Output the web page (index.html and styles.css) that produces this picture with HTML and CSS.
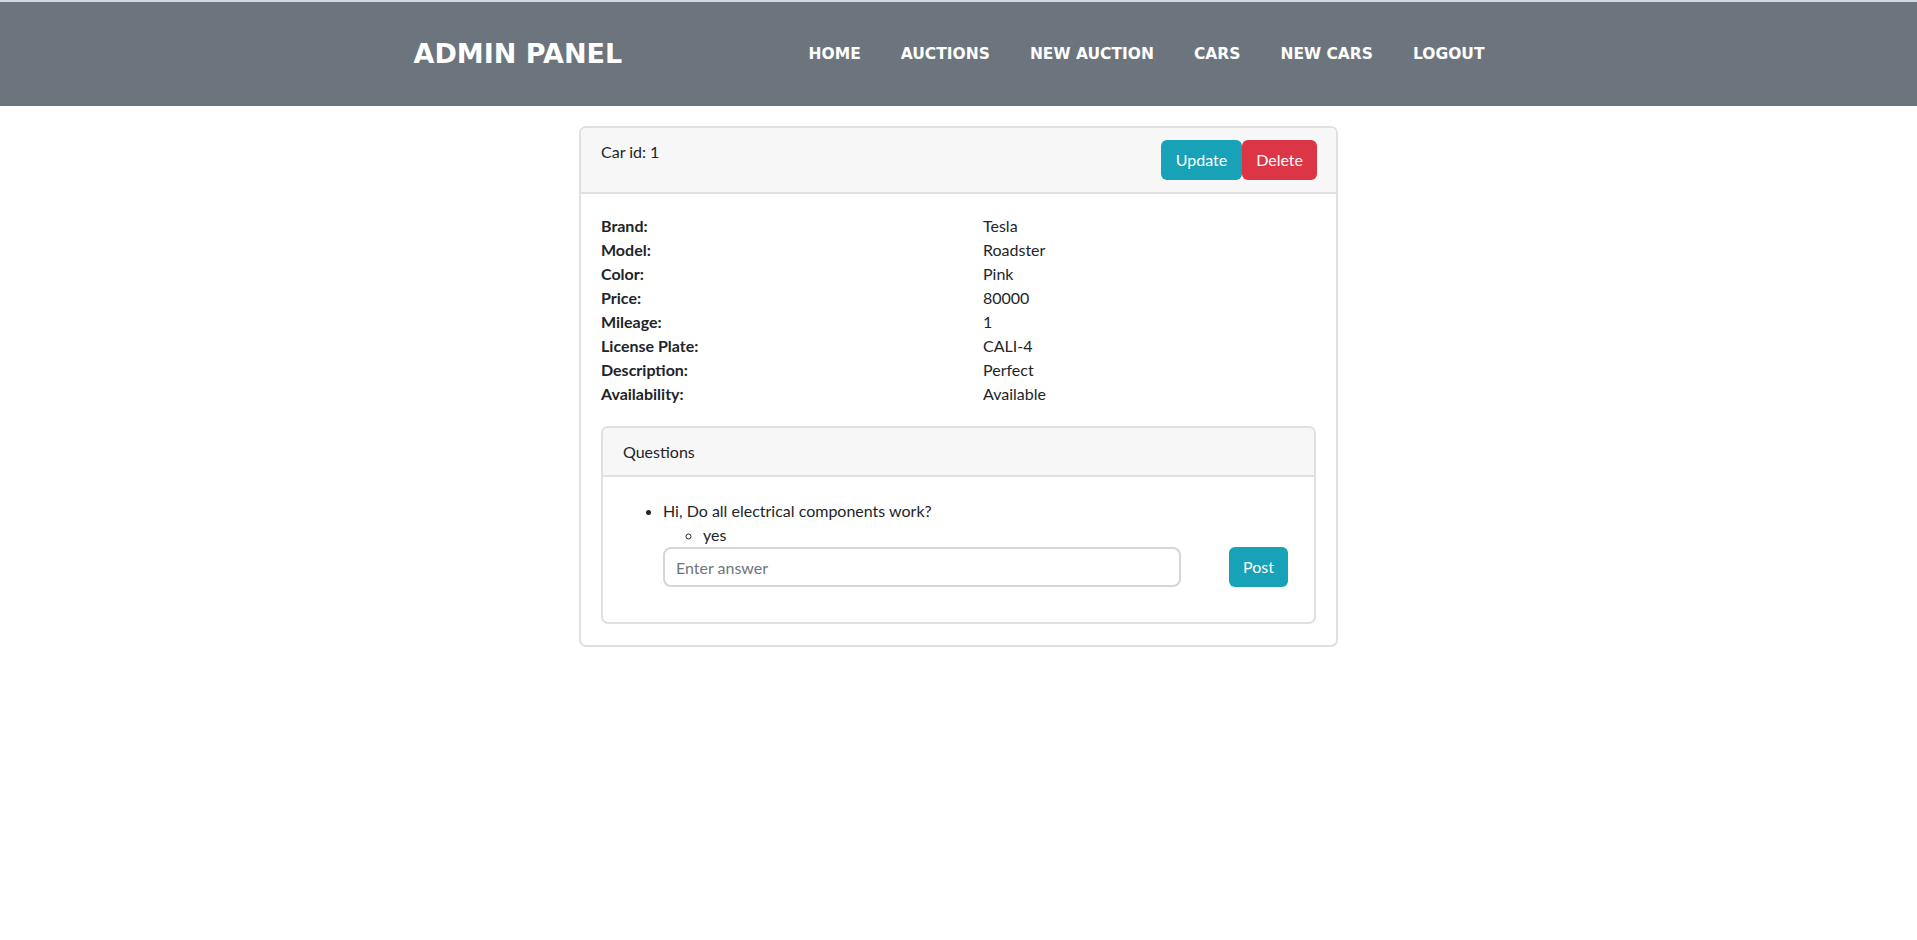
FILE: index.html
```html
<!DOCTYPE html>
<html lang="en">
<head>
<meta charset="utf-8">
<title>Admin Panel</title>
<link rel="stylesheet" href="styles.css">
</head>
<body>
<header class="topbar">
  <div class="topbar-inner">
    <div class="brand">ADMIN PANEL</div>
    <nav class="nav">
      <a href="#">HOME</a>
      <a href="#">AUCTIONS</a>
      <a href="#">NEW AUCTION</a>
      <a href="#">CARS</a>
      <a href="#">NEW CARS</a>
      <a href="#">LOGOUT</a>
    </nav>
  </div>
</header>

<main class="card car-card">
  <div class="card-header car-header">
    <div class="car-id">Car id: 1</div>
    <div class="actions">
      <button class="btn btn-info">Update</button>
      <button class="btn btn-danger">Delete</button>
    </div>
  </div>
  <div class="card-body">
    <dl class="details">
      <dt>Brand:</dt><dd>Tesla</dd>
      <dt>Model:</dt><dd>Roadster</dd>
      <dt>Color:</dt><dd>Pink</dd>
      <dt>Price:</dt><dd>80000</dd>
      <dt>Mileage:</dt><dd>1</dd>
      <dt>License Plate:</dt><dd>CALI-4</dd>
      <dt>Description:</dt><dd>Perfect</dd>
      <dt>Availability:</dt><dd>Available</dd>
    </dl>

    <section class="card questions">
      <div class="card-header">Questions</div>
      <div class="card-body">
        <ul class="q-list">
          <li>Hi, Do all electrical components work?
            <ul class="a-list">
              <li>yes</li>
            </ul>
            <form class="answer-form">
              <input class="answer-input" type="text" placeholder="Enter answer">
              <button class="btn btn-info btn-post" type="button">Post</button>
            </form>
          </li>
        </ul>
      </div>
    </section>
  </div>
</main>
</body>
</html>
```

FILE: styles.css
```css
html, body {
  margin: 0;
  padding: 0;
}

body {
  font-family: Lato, "Open Sans", "Liberation Sans", sans-serif;
  font-size: 16px;
  line-height: 24px;
  color: #212529;
  background: #ffffff;
}

.topbar {
  background: #6c757d;
  border-top: 2px solid #d4d8dc;
  height: 104px;
}

.topbar-inner {
  width: 1140px;
  margin: 0 auto;
  box-sizing: border-box;
  padding: 0 44px 0 25px;
  height: 100%;
  display: flex;
  align-items: center;
}

.brand {
  font-family: "DejaVu Sans", "Liberation Sans", sans-serif;
  font-weight: bold;
  font-size: 27px;
  color: #ffffff;
}

.nav {
  margin-left: auto;
  display: flex;
  gap: 40px;
}

.nav a {
  font-family: "DejaVu Sans", "Liberation Sans", sans-serif;
  font-weight: bold;
  font-size: 15.5px;
  color: #ffffff;
  text-decoration: none;
}

.card {
  border: 2px solid #e0e0e0;
  border-radius: 7px;
  background: #ffffff;
  overflow: hidden;
}

.car-card {
  width: 759px;
  box-sizing: border-box;
  margin: 20px auto 0;
}

.card-header {
  background: #f7f7f7;
  border-bottom: 2px solid #e0e0e0;
  padding: 12px 20px;
}

.car-header {
  display: flex;
  justify-content: space-between;
  align-items: flex-start;
  padding: 12px 19px 12px 20px;
}

.actions {
  display: flex;
}

.btn {
  font-family: Lato, "Open Sans", sans-serif;
  font-size: 16px;
  line-height: 24px;
  color: #ffffff;
  border: none;
  border-radius: 6px;
  height: 40px;
  padding: 0 15px;
  cursor: pointer;
}

.btn-info {
  background: #17a2b8;
}

.btn-danger {
  background: #dc3545;
  padding: 0 14px;
}

.card-body {
  padding: 20px 20px 21px;
}

.details {
  display: grid;
  grid-template-columns: 382px 1fr;
  margin: 0;
}

.details dt {
  font-weight: bold;
}

.details dd {
  margin: 0;
}

.questions {
  margin-top: 20px;
}

.questions .card-header {
  padding: 12px 20px 11px;
}

.questions .card-body {
  padding: 22px 20px 19px;
}

.q-list {
  margin: 0 0 16px;
  padding-left: 40px;
  list-style: disc;
}

.a-list {
  margin: 0;
  padding-left: 40px;
  list-style: circle;
}

.answer-form {
  display: flex;
  align-items: center;
  padding-right: 6px;
}

.answer-input {
  width: 518px;
  height: 40px;
  box-sizing: border-box;
  border: 2px solid #d3d6db;
  border-radius: 8px;
  padding: 6px 11px;
  font-family: Lato, "Open Sans", sans-serif;
  font-size: 16px;
  color: #212529;
  outline: none;
}

.answer-input::placeholder {
  color: #6c757d;
}

.btn-post {
  margin-left: auto;
  width: 59px;
  padding: 0;
}
```
